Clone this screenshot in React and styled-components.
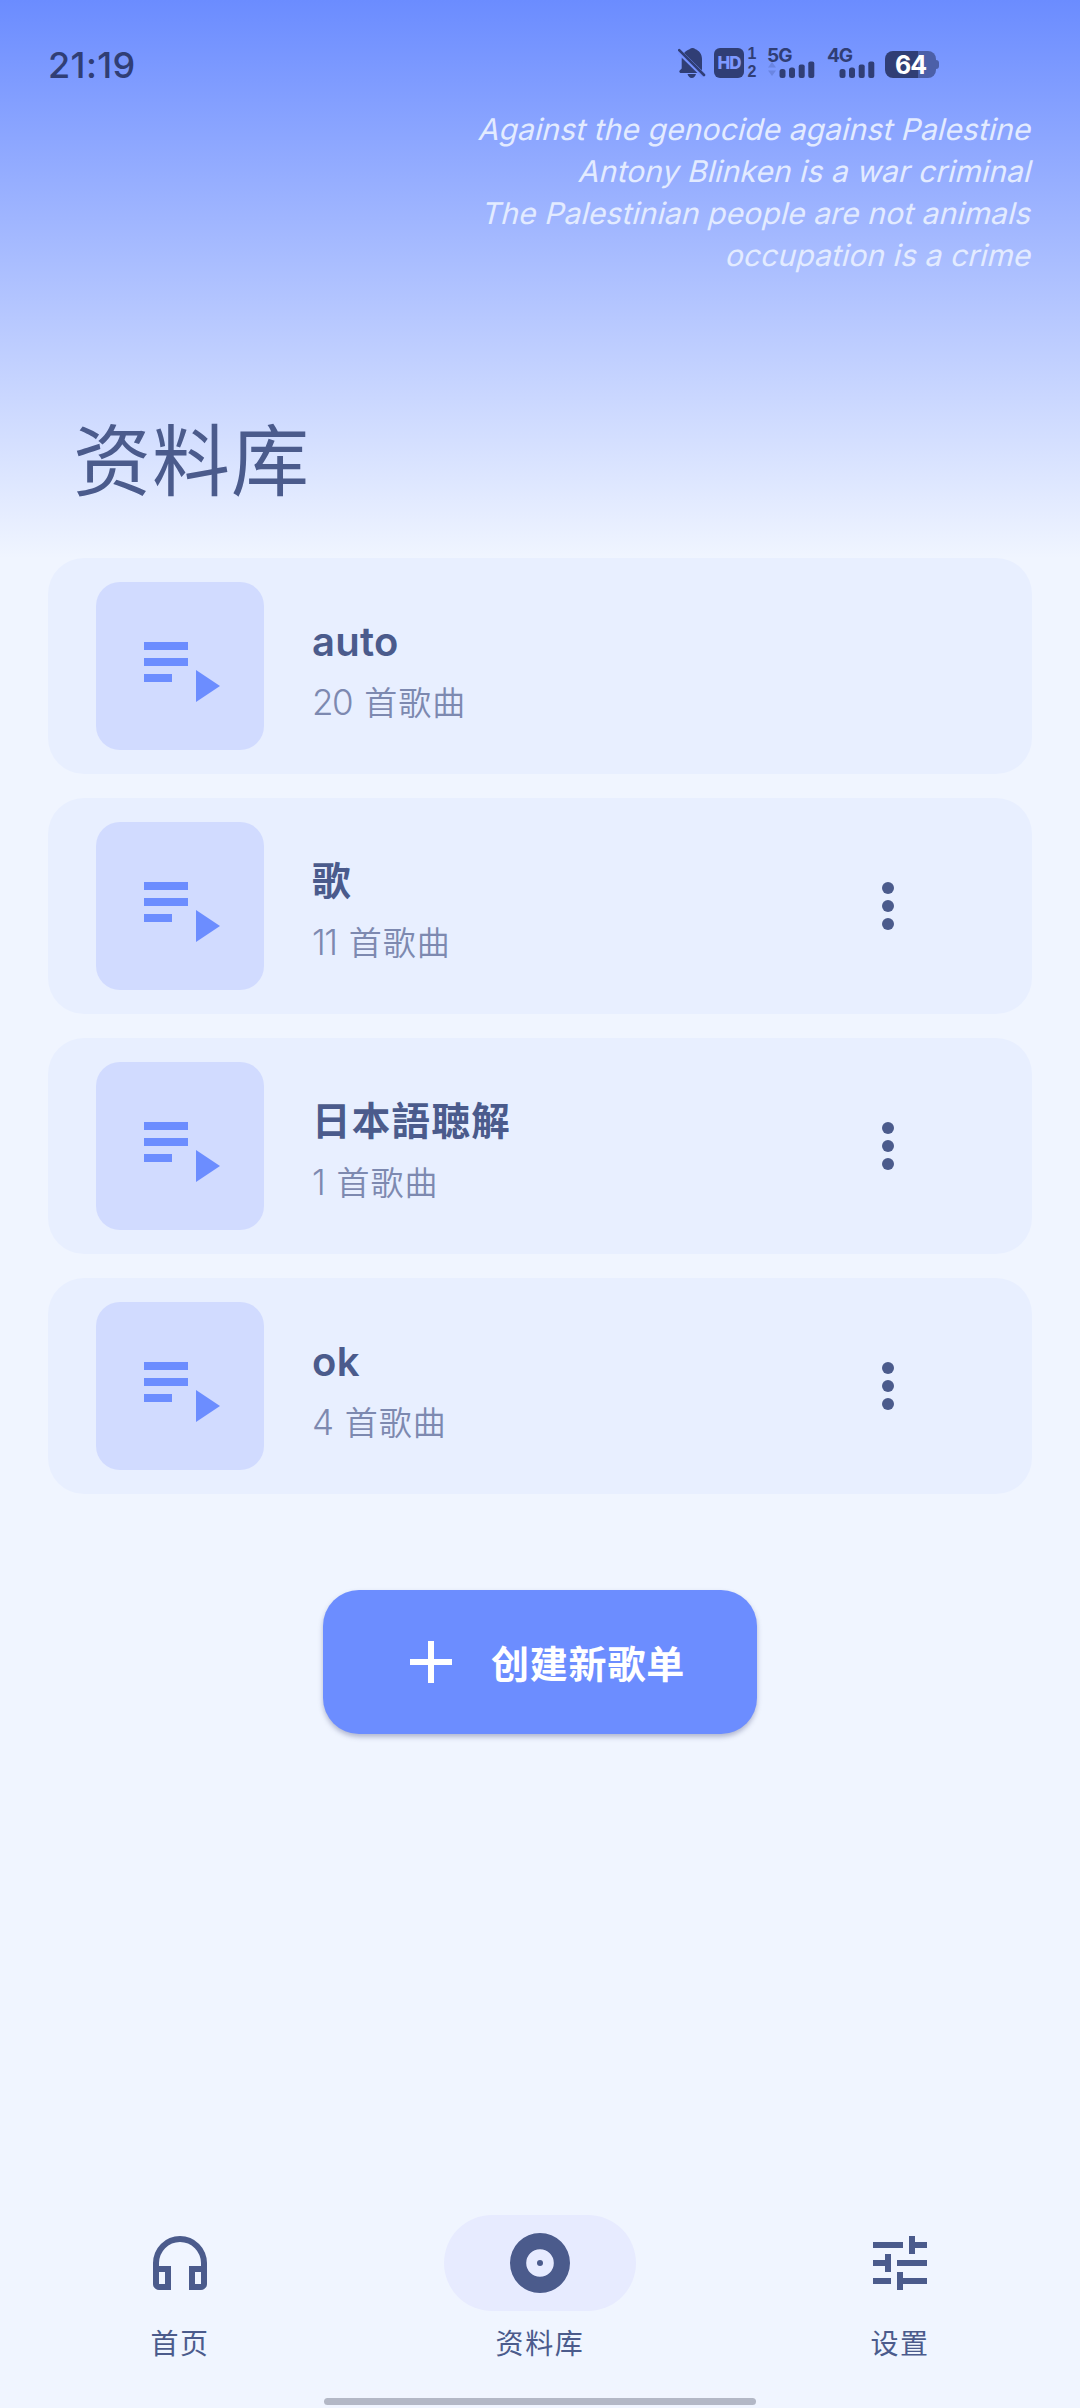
import React from "react";
import styled, { createGlobalStyle } from "styled-components";

const playlists = [
  { name: "auto", count: 20, locked: true },
  { name: "歌", count: 11, cjk: true },
  { name: "日本語聴解", count: 1, cjk: true },
  { name: "ok", count: 4 },
];

const slogans = [
  "Against the genocide against Palestine",
  "Antony Blinken is a war criminal",
  "The Palestinian people are not animals",
  "occupation is a crime",
];

const PlaylistIcon = () => (
  <svg width="96" height="96" viewBox="0 0 24 24" fill="#6c8dff">
    <path d="M3 10h11v2H3zM3 6h11v2H3zM3 14h7v2H3zM16 13v8l6-4z" />
  </svg>
);

const MoreIcon = () => (
  <svg width="72" height="72" viewBox="0 0 24 24" fill="#4b5b8c">
    <circle cx="12" cy="6" r="2" />
    <circle cx="12" cy="12" r="2" />
    <circle cx="12" cy="18" r="2" />
  </svg>
);

const PlusIcon = () => (
  <svg width="72" height="72" viewBox="0 0 24 24" fill="#fff">
    <path d="M11 5h2v6h6v2h-6v6h-2v-6H5v-2h6z" />
  </svg>
);

const HomeIcon = () => (
  <svg width="72" height="72" viewBox="0 0 24 24" fill="#4b5b8c">
    <path
      fillRule="evenodd"
      d="M12 3a9 9 0 0 0-9 9v7c0 1.1.9 2 2 2h4v-8H5v-1a7 7 0 0 1 14 0v1h-4v8h4c1.1 0 2-.9 2-2v-7a9 9 0 0 0-9-9zM7 15v4H5v-4h2zm12 4h-2v-4h2v4z"
    />
  </svg>
);

const AlbumIcon = () => (
  <svg width="72" height="72" viewBox="0 0 24 24" fill="#4b5b8c">
    <path
      fillRule="evenodd"
      d="M12 2a10 10 0 1 0 0 20 10 10 0 0 0 0-20zm0 5.4a4.6 4.6 0 1 1 0 9.2 4.6 4.6 0 0 1 0-9.2z"
    />
    <circle cx="12" cy="12" r="1" />
  </svg>
);

const TuneIcon = () => (
  <svg width="72" height="72" viewBox="0 0 24 24" fill="#4b5b8c">
    <path d="M3 17v2h6v-2H3zM3 5v2h10V5H3zm10 16v-2h8v-2h-8v-2h-2v6h2zM7 9v2H3v2h4v2h2V9H7zm14 4v-2H11v2h10zm-6-4h2V7h4V5h-4V3h-2v6z" />
  </svg>
);

const BellOffIcon = () => (
  <svg width="28" height="30" viewBox="0 0 28 30" fill="#303e75">
    <path d="M4 25h19c1.400 0 1.500-1.500.6-2.300L24 21V11c0-5-3-8.500-6.500-9.800a5 5 0 0 0-6 0C10 1.700 8.700 2.400 7.500 3.500 5 5.500 3.700 8.500 3.700 11v9.500l-2 2c-.9.900-.2 2.500 1.300 2.500zM9.500 26h8.500c-.6 2.300-2 4-4.200 4s-3.700-1.700-4.300-4z" />
    <path d="M0 2.500 26 28" stroke="#7591ff" strokeWidth="5" />
    <path d="M1.200 2.200 26 27" stroke="#303e75" strokeWidth="2.600" strokeLinecap="round" />
  </svg>
);

const SignalIcon = ({ arrows }) => (
  <svg width="48" height="17" viewBox="0 0 48 17" fill="#303e75">
    {arrows && <path d="M1 6.500 5 1l4 5.500zM1 9.500h8L5 15z" fill="#5f78cf" opacity=".6" />}
    <rect x="12.500" y="8" width="6" height="9" rx="2.500" />
    <rect x="22" y="6.500" width="6" height="10.500" rx="2.500" />
    <rect x="31.700" y="3.500" width="6" height="13.500" rx="2" />
    <rect x="41.300" y="0.500" width="6" height="16.500" rx="2" />
  </svg>
);

const tabs = [
  { label: "首页", icon: <HomeIcon /> },
  { label: "资料库", icon: <AlbumIcon />, active: true },
  { label: "设置", icon: <TuneIcon /> },
];

const App = () => {
  return (
    <>
      <GlobalStyle />
      <Screen>
        <Header>
          <StatusBar>
            <Clock>21:19</Clock>
            <StatusIcons>
              <BellOffIcon />
              <HdGroup>
                <HdBadge>HD</HdBadge>
                <SimNumbers>
                  <span>1</span>
                  <span>2</span>
                </SimNumbers>
              </HdGroup>
              <Network>
                <NetworkType>5G</NetworkType>
                <SignalIcon arrows />
              </Network>
              <Network>
                <NetworkType>4G</NetworkType>
                <SignalIcon />
              </Network>
              <Battery>
                <BatteryBody>64</BatteryBody>
                <BatteryTip />
              </Battery>
            </StatusIcons>
          </StatusBar>
          <Slogans>
            {slogans.map((text) => (
              <Slogan key={text}>{text}</Slogan>
            ))}
          </Slogans>
          <PageTitle>资料库</PageTitle>
        </Header>

        <List>
          {playlists.map((p) => (
            <Card key={p.name}>
              <Thumb>
                <PlaylistIcon />
              </Thumb>
              <Info>
                <Name $cjk={p.cjk}>{p.name}</Name>
                <Count>
                  <Digits>{p.count}</Digits> 首歌曲
                </Count>
              </Info>
              {!p.locked && (
                <MoreButton>
                  <MoreIcon />
                </MoreButton>
              )}
            </Card>
          ))}
        </List>

        <CreateButton>
          <PlusIcon />
          <span>创建新歌单</span>
        </CreateButton>

        <NavBar>
          {tabs.map((t) => (
            <Tab key={t.label}>
              <TabPill $active={t.active}>{t.icon}</TabPill>
              <TabLabel>{t.label}</TabLabel>
            </Tab>
          ))}
        </NavBar>
        <HomeIndicator />
      </Screen>
    </>
  );
};

const GlobalStyle = createGlobalStyle`
  * {
    box-sizing: border-box;
  }
  body {
    margin: 0;
    background: #f0f5ff;
    font-family: Inter, "Noto Sans CJK SC", sans-serif;
  }
  svg {
    display: block;
    flex: none;
  }
`;

const Screen = styled.div`
  width: 1080px;
  height: 2408px;
  display: flex;
  flex-direction: column;
  overflow: hidden;
  background: #f0f5ff;
`;

const Header = styled.header`
  height: 558px;
  flex: none;
  display: flex;
  flex-direction: column;
  background: linear-gradient(#6b8cff, #f0f5ff);
`;

const StatusBar = styled.div`
  height: 108px;
  padding: 48px 141px 0 48px;
  display: flex;
  justify-content: space-between;
  align-items: flex-start;
  color: #303e75;
`;

const Clock = styled.span`
  font-size: 36px;
  font-weight: 500;
  line-height: 34px;
  letter-spacing: 0.4px;
`;

const StatusIcons = styled.div`
  display: flex;
  align-items: flex-start;
`;

const HdGroup = styled.div`
  display: flex;
  margin-left: 8px;
  gap: 3px;
`;

const HdBadge = styled.span`
  width: 30px;
  height: 30px;
  border-radius: 6px;
  background: #303e75;
  color: #7f99ff;
  font-size: 17px;
  font-weight: 800;
  line-height: 30px;
  text-align: center;
  letter-spacing: -1px;
`;

const SimNumbers = styled.div`
  width: 10px;
  height: 32px;
  margin-top: -3px;
  display: flex;
  flex-direction: column;
  align-items: center;
  font-family: "Liberation Sans", sans-serif;
  font-size: 16px;
  font-weight: 700;
  line-height: 18px;
`;

const Network = styled.div`
  width: 48px;
  margin-left: 10px;
  display: flex;
  flex-direction: column;

  & + & {
    margin-left: 12px;
  }
`;

const NetworkType = styled.span`
  height: 13px;
  font-size: 19px;
  font-weight: 700;
  line-height: 15px;
  letter-spacing: -1px;
`;

const Battery = styled.div`
  display: flex;
  align-items: center;
  margin: 3px 0 0 10px;
`;

const BatteryBody = styled.span`
  width: 51px;
  height: 27px;
  border-radius: 8px;
  background: linear-gradient(90deg, #303e75 64%, #4c60a8 64%);
  color: #fff;
  font-size: 25px;
  font-weight: 700;
  line-height: 28px;
  text-align: center;
  letter-spacing: -1px;
`;

const BatteryTip = styled.span`
  width: 3px;
  height: 9px;
  border-radius: 0 3px 3px 0;
  background: #4c60a8;
`;

const Slogans = styled.div`
  padding: 0 47px;
  display: flex;
  flex-direction: column;
  align-items: flex-end;
`;

/* Slanted upright face, so the a keeps its two storeys. */
const Slogan = styled.p`
  margin: 0;
  color: #e3ebff;
  font-size: 30px;
  font-weight: 400;
  line-height: 42px;
  letter-spacing: 0.1px;
  white-space: nowrap;
  transform: skewX(-14deg);
`;

const PageTitle = styled.h1`
  margin: auto 0 0;
  padding: 0 73px 41px;
  color: #4b5b8c;
  font-size: 78px;
  font-weight: 400;
  line-height: 110px;
  letter-spacing: 1px;
`;

const List = styled.div`
  padding: 0 48px;
  display: flex;
  flex-direction: column;
  gap: 24px;
`;

const Card = styled.div`
  height: 216px;
  padding: 0 108px 0 48px;
  display: flex;
  align-items: center;
  border-radius: 36px;
  background: #e8efff;
`;

const Thumb = styled.div`
  width: 168px;
  height: 168px;
  flex: none;
  display: flex;
  align-items: center;
  justify-content: center;
  border-radius: 24px;
  background: #d1dbff;
`;

const Info = styled.div`
  flex: 1;
  margin-left: 48px;
  padding-top: 11px;
`;

const Name = styled.div`
  color: #4b5b8c;
  font-size: ${(props) => (props.$cjk ? 38.5 : 40)}px;
  font-weight: ${(props) => (props.$cjk ? 700 : 600)};
  line-height: 61px;
  letter-spacing: ${(props) => (props.$cjk ? 1.3 : 0.3)}px;
`;

const Count = styled.div`
  color: #7d89b0;
  font-size: 33px;
  font-weight: 350;
  line-height: 60px;
  letter-spacing: 1px;
  word-spacing: 2px;
`;

const Digits = styled.span`
  font-size: 35px;
  font-weight: 350;
  letter-spacing: -1.6px;
`;

const MoreButton = styled.button`
  padding: 0;
  border: 0;
  background: none;
`;

const CreateButton = styled.button`
  width: 434px;
  height: 144px;
  margin: 96px auto 0;
  padding: 0 0 0 72px;
  flex: none;
  display: flex;
  align-items: center;
  gap: 24px;
  border: 0;
  border-radius: 36px;
  background: #6c8dff;
  box-shadow: 0 3px 5px rgba(60, 70, 120, 0.35);
  color: #fff;
  font-family: inherit;
  font-size: 38px;
  font-weight: 700;
  letter-spacing: 0.8px;

  span {
    padding-bottom: 2px;
  }
`;

const NavBar = styled.nav`
  margin-top: auto;
  height: 183px;
  flex: none;
  display: grid;
  grid-template-columns: repeat(3, 1fr);
`;

const Tab = styled.div`
  display: flex;
  flex-direction: column;
  align-items: center;
`;

const TabPill = styled.div`
  width: 192px;
  height: 96px;
  display: flex;
  align-items: center;
  justify-content: center;
  border-radius: 48px;
  background: ${(props) => (props.$active ? "#e7ebff" : "transparent")};
`;

const TabLabel = styled.span`
  margin-top: 13px;
  color: #4b5b8c;
  font-size: 28px;
  line-height: 40px;
  letter-spacing: 1.6px;
`;

const HomeIndicator = styled.div`
  width: 432px;
  height: 7px;
  margin: 0 auto 3px;
  flex: none;
  border-radius: 4px;
  background: #b3b8c6;
`;

export default App;
